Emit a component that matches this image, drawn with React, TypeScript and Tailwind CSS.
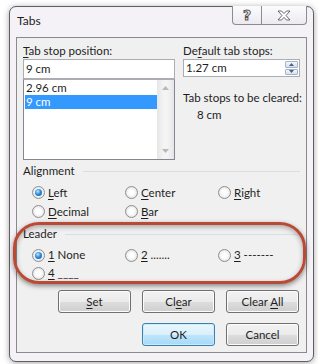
import React from 'react'

const txt = "whitespace-nowrap font-['Lato',sans-serif] text-[11.5px] leading-[16px] text-[#1e1e1e]"

function U({ c }: { c: string }) {
  return <span className="underline underline-offset-2">{c}</span>
}

function Radio({ checked }: { checked?: boolean }) {
  return (
    <span className="flex h-[13px] w-[13px] shrink-0 items-center justify-center rounded-full border border-[#8f8f8f] bg-[radial-gradient(circle_at_50%_50%,#ffffff_30%,#d6d6d6_100%)]">
      {checked && (
        <span className="h-[7px] w-[7px] rounded-full bg-[radial-gradient(circle_at_40%_35%,#bfe8ff_0%,#2c8ee0_45%,#0d4f96_100%)]" />
      )}
    </span>
  )
}

function Option({ checked, children }: { checked?: boolean; children: React.ReactNode }) {
  return (
    <div className="flex items-center gap-[3px]">
      <Radio checked={checked} />
      <span className={txt}>{children}</span>
    </div>
  )
}

function GroupTitle({ label }: { label: string }) {
  return (
    <div className="flex items-center gap-[8px]">
      <span className={txt}>{label}</span>
      <span className="h-px flex-1 bg-[#d5dfe5]" />
    </div>
  )
}

function Btn({ children, primary }: { children: React.ReactNode; primary?: boolean }) {
  return (
    <button
      className={
        primary
          ? 'flex h-[23px] w-[73px] items-center justify-center rounded-[3px] border border-[#3c7fb1] bg-[linear-gradient(#eaf6fd_0%,#d9f0fc_50%,#bee6fd_51%,#a7d9f5_100%)] shadow-[inset_0_0_0_1px_#c8ecfc]'
          : 'flex h-[23px] w-[73px] items-center justify-center rounded-[3px] border border-[#707070] bg-[linear-gradient(#f2f2f2_0%,#ebebeb_50%,#dddddd_51%,#cfcfcf_100%)] shadow-[inset_0_0_0_1px_#fcfcfc]'
      }
    >
      <span className={txt}>{children}</span>
    </button>
  )
}

function Triangle({ up }: { up?: boolean }) {
  return (
    <svg width="7" height="4" viewBox="0 0 7 4">
      <path d={up ? 'M0 4 L3.5 0 L7 4 Z' : 'M0 0 L3.5 4 L7 0 Z'} fill="#b8b8b8" />
    </svg>
  )
}

export default function App() {
  return (
    <div className="relative h-[364px] w-[318px] overflow-hidden bg-white">
      {/* window */}
      <div className="ml-[9px] mt-[6px] flex h-[356px] w-[305px] flex-col rounded-[7px] border border-[#5f5f5f] bg-[#f4f1f7] shadow-[0_1px_6px_rgba(0,0,0,0.35)]">
        {/* title bar */}
        <div className="flex h-[30px] items-start justify-between">
          <span className="ml-[7px] mt-[6px] font-['Lato',sans-serif] text-[12px] leading-[16px] text-[#1e1e1e]">Tabs</span>
          <div className="-mt-px mr-[6px] flex h-[19px]">
            <div className="flex w-[30px] items-center justify-center rounded-bl-[4px] border border-t-0 border-[#8c8c8c] bg-[linear-gradient(#fbfbfd,#eceaf0)]">
              <span className="font-['DejaVu_Sans',sans-serif] text-[14px] font-bold leading-none text-transparent [-webkit-text-stroke:1px_#555]">?</span>
            </div>
            <div className="flex w-[45px] items-center justify-center rounded-br-[4px] border border-l-0 border-t-0 border-[#8c8c8c] bg-[linear-gradient(#fbfbfd,#eceaf0)]">
              <svg width="14" height="11" viewBox="0 0 14 11">
                <path
                  d="M1 1 H4.5 L7 3.6 L9.5 1 H13 L9 5.5 L13 10 H9.5 L7 7.4 L4.5 10 H1 L5 5.5 Z"
                  fill="#ffffff"
                  stroke="#5a5a5a"
                  strokeWidth="0.9"
                  strokeLinejoin="round"
                />
              </svg>
            </div>
          </div>
        </div>

        {/* content */}
        <div className="mx-[6px] flex h-[316px] flex-col border border-[#8a8a8a] bg-[#f0f0f0] pl-[6px] pr-[6px] pt-[5px]">
          <div className="flex gap-[8px]">
            {/* left column */}
            <div className="flex w-[152px] flex-col">
              <span className={txt}>
                <U c="T" />ab stop position:
              </span>
              <div className="flex h-[20px] items-center border border-[#abadb3] bg-white pl-[2px]">
                <span className={txt}>9 cm</span>
              </div>
              <div className="flex h-[81px] border border-[#828790] border-t-[#abadb3] bg-white">
                <div className="flex flex-1 flex-col pl-px pt-px">
                  <div className="h-[14px] pl-[1px] font-['Lato',sans-serif] text-[11.5px] leading-[14px] text-[#1e1e1e]">2.96 cm</div>
                  <div className="h-[14px] bg-[#3399ff] pl-[1px] font-['Lato',sans-serif] text-[11.5px] leading-[14px] text-white">
                    9 cm
                  </div>
                </div>
                <div className="flex w-[17px] flex-col items-center justify-between bg-[linear-gradient(90deg,#e6e6e6,#f4f4f4_40%,#f4f4f4_60%,#e6e6e6)] py-[6px]">
                  <Triangle up />
                  <Triangle />
                </div>
              </div>
            </div>

            {/* right column */}
            <div className="flex w-[117px] flex-col">
              <span className={txt}>
                De<U c="f" />ault tab stops:
              </span>
              <div className="flex h-[18px] items-center justify-between border border-[#abadb3] bg-white pl-[2px]">
                <span className={txt}>1.27 cm</span>
                <div className="flex h-full w-[15px] flex-col gap-px p-px">
                  <div className="flex flex-1 items-center justify-center rounded-[1px] border border-[#a5b4c7] bg-[linear-gradient(#f3f7fb,#d5dfeb)]">
                    <svg width="5" height="3" viewBox="0 0 5 3">
                      <path d="M0 3 L2.5 0 L5 3 Z" fill="#4c607f" />
                    </svg>
                  </div>
                  <div className="flex flex-1 items-center justify-center rounded-[1px] border border-[#a5b4c7] bg-[linear-gradient(#f3f7fb,#d5dfeb)]">
                    <svg width="5" height="3" viewBox="0 0 5 3">
                      <path d="M0 0 L2.5 3 L5 0 Z" fill="#4c607f" />
                    </svg>
                  </div>
                </div>
              </div>
              <span className={txt + ' mt-[13px]'}>Tab stops to be cleared:</span>
              <span className={txt + ' ml-[14px] mt-[1px]'}>8 cm</span>
            </div>
          </div>

          {/* alignment */}
          <div className="mt-[3px]">
            <GroupTitle label="Alignment" />
          </div>
          <div className="mt-[4px] grid grid-cols-[93px_93px_93px] pl-[9px]">
            <div className="flex h-[19px] items-center">
              <Option checked>
                <U c="L" />eft
              </Option>
            </div>
            <div className="flex h-[19px] items-center">
              <Option>
                <U c="C" />enter
              </Option>
            </div>
            <div className="flex h-[19px] items-center">
              <Option>
                <U c="R" />ight
              </Option>
            </div>
            <div className="flex h-[19px] items-center">
              <Option>
                <U c="D" />ecimal
              </Option>
            </div>
            <div className="flex h-[19px] items-center">
              <Option>
                <U c="B" />ar
              </Option>
            </div>
          </div>

          {/* leader */}
          <div className="mt-[5px]">
            <GroupTitle label="Leader" />
          </div>
          <div className="mt-[4px] grid grid-cols-[93px_93px_93px] pl-[9px]">
            <div className="flex h-[18px] items-center">
              <Option checked>
                <U c="1" /> None
              </Option>
            </div>
            <div className="flex h-[18px] items-center">
              <Option>
                <U c="2" /> .......
              </Option>
            </div>
            <div className="flex h-[18px] items-center">
              <Option>
                <U c="3" /> -------
              </Option>
            </div>
            <div className="flex h-[18px] items-center">
              <Option>
                <U c="4" /> ____
              </Option>
            </div>
          </div>

          {/* buttons */}
          <div className="mt-[8px] flex justify-end gap-[11px] pr-px">
            <Btn>
              <U c="S" />et
            </Btn>
            <Btn>
              Cl<U c="e" />ar
            </Btn>
            <Btn>
              Clear <U c="A" />ll
            </Btn>
          </div>
          <div className="mt-[10px] flex justify-end gap-[11px] pr-px">
            <Btn primary>OK</Btn>
            <Btn>Cancel</Btn>
          </div>
        </div>
      </div>

      {/* annotation ring */}
      <div className="absolute left-[13px] top-[222px] h-[62px] w-[293px] rounded-[26px] border-[3px] border-[#b94a36] shadow-[0_2px_5px_rgba(0,0,0,0.45),inset_0_2px_5px_rgba(0,0,0,0.3)]" />
    </div>
  )
}
